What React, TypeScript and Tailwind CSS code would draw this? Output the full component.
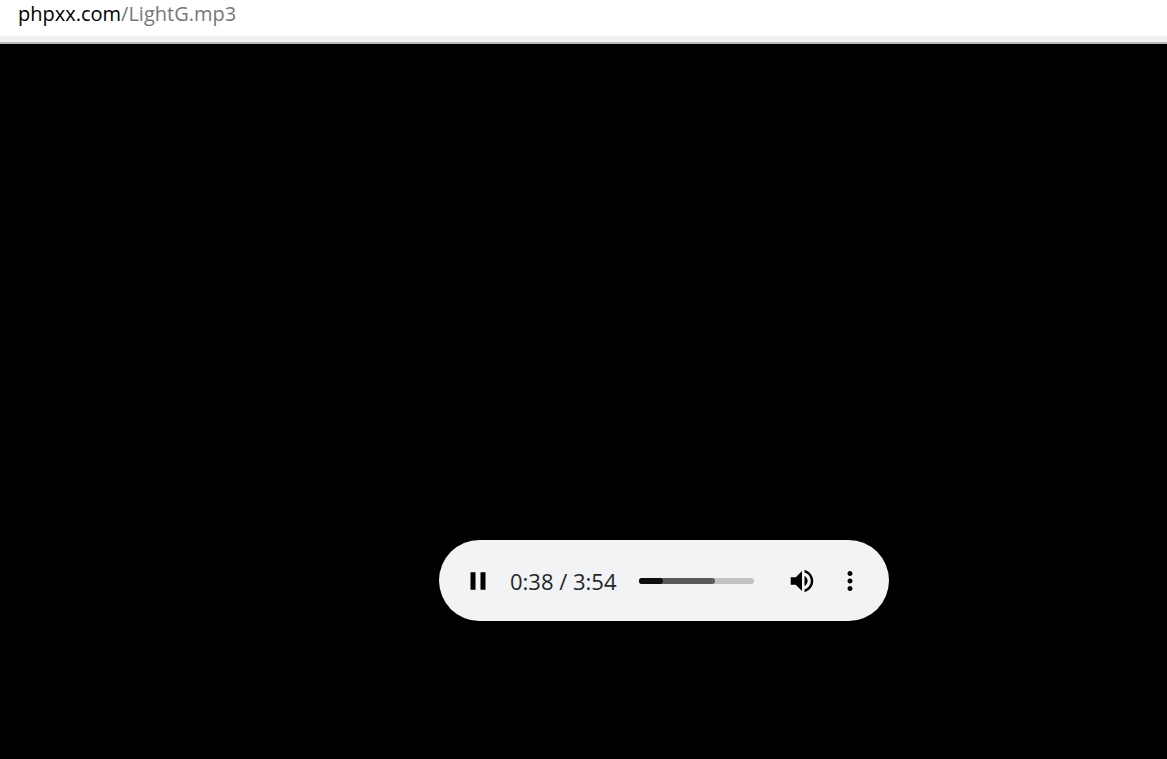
import React from "react";

function AddressBar() {
  return (
    <header className="shrink-0 border-b-2 border-[#b8b8b8] bg-[#f1f1f1] pb-[6px]">
      <div className="flex h-9 items-start bg-white px-[18px] text-[20px] leading-7">
        <a href="http://phpxx.com/LightG.mp3" className="whitespace-nowrap text-[#777777]">
          <span className="text-black">phpxx.com</span>/LightG.mp3
        </a>
      </div>
    </header>
  );
}

function IconButton({ label, path }: { label: string; path: string }) {
  return (
    <button type="button" aria-label={label} className="flex size-12 shrink-0 items-center justify-center text-black">
      <svg viewBox="0 0 24 24" className="size-[30px]" fill="currentColor" aria-hidden="true">
        <path d={path} />
      </svg>
    </button>
  );
}

function Timeline() {
  return (
    <div className="relative ml-[22px] h-[6px] flex-1 rounded-full bg-[#c2c2c2]">
      <div className="h-full w-[66%] rounded-full bg-[#5b5b5a]">
        <div className="h-full w-6 rounded-full bg-[#0c0f0d]" />
      </div>
      <input
        type="range"
        aria-label="Seek"
        min={0}
        max={234}
        defaultValue={38}
        className="absolute inset-0 h-full w-full cursor-pointer opacity-0"
      />
    </div>
  );
}

function AudioPlayer() {
  return (
    <section
      aria-label="Audio player"
      className="flex h-[81px] w-full max-w-[450px] items-center rounded-full bg-[#f1f3f4] px-[15px] pt-px"
    >
      <IconButton label="Pause" path="M6 19h4V5H6v14zm8-14v14h4V5h-4z" />
      <span className="ml-2 whitespace-nowrap text-[22px] leading-[30px] text-[#252729]">0:38 / 3:54</span>
      <Timeline />
      <div className="ml-6 flex">
        <IconButton
          label="Mute"
          path="M3 9v6h4l5 5V4L7 9H3zm13.5 3c0-1.77-1.02-3.29-2.5-4.03v8.05c1.48-.73 2.5-2.25 2.5-4.02zM14 3.23v2.06c2.89.86 5 3.54 5 6.71s-2.11 5.85-5 6.71v2.06c4.01-.91 7-4.49 7-8.77s-2.99-7.86-7-8.77z"
        />
        <IconButton
          label="More options"
          path="M12 8c1.1 0 2-.9 2-2s-.9-2-2-2-2 .9-2 2 .9 2 2 2zm0 2c-1.1 0-2 .9-2 2s.9 2 2 2 2-.9 2-2-.9-2-2-2zm0 6c-1.1 0-2 .9-2 2s.9 2 2 2 2-.9 2-2-.9-2-2-2z"
        />
      </div>
    </section>
  );
}

export default function App() {
  return (
    <div className="flex min-h-screen flex-col bg-black font-['Open_Sans','Noto_Sans',sans-serif]">
      <AddressBar />
      <main className="flex flex-1 items-end justify-center pb-[138px] pl-[161px]">
        <AudioPlayer />
      </main>
    </div>
  );
}
